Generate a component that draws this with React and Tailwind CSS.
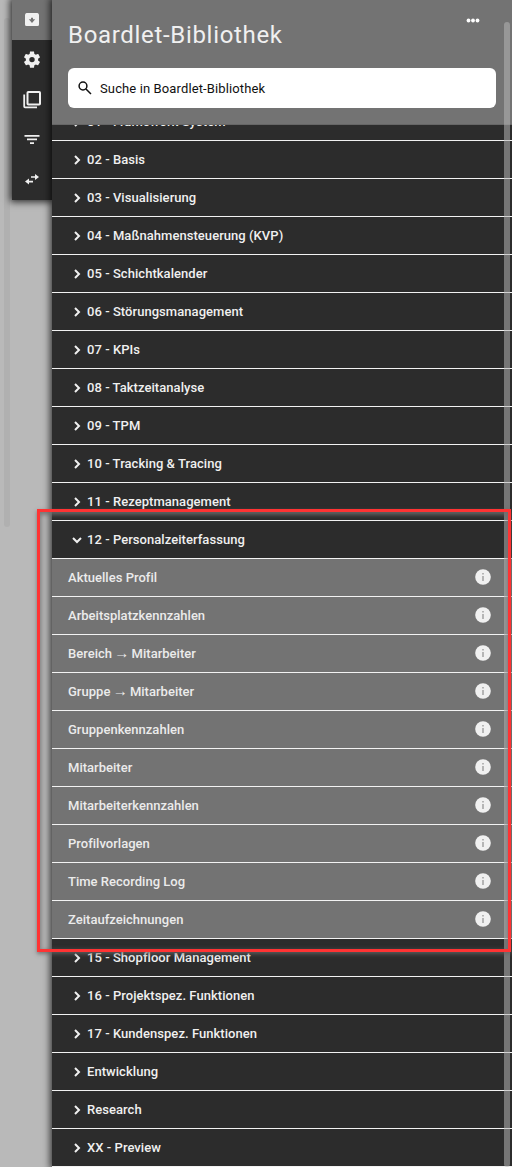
import React from "react";

const before = [
  "02 - Basis",
  "03 - Visualisierung",
  "04 - Maßnahmensteuerung (KVP)",
  "05 - Schichtkalender",
  "06 - Störungsmanagement",
  "07 - KPIs",
  "08 - Taktzeitanalyse",
  "09 - TPM",
  "10 - Tracking & Tracing",
  "11 - Rezeptmanagement",
];
const items = [
  "Aktuelles Profil",
  "Arbeitsplatzkennzahlen",
  "Bereich → Mitarbeiter",
  "Gruppe → Mitarbeiter",
  "Gruppenkennzahlen",
  "Mitarbeiter",
  "Mitarbeiterkennzahlen",
  "Profilvorlagen",
  "Time Recording Log",
  "Zeitaufzeichnungen",
];
const after = [
  "15 - Shopfloor Management",
  "16 - Projektspez. Funktionen",
  "17 - Kundenspez. Funktionen",
  "Entwicklung",
  "Research",
  "XX - Preview",
];

function Chevron({ open }) {
  return (
    <svg width="10" height="10" viewBox="0 0 10 10" fill="none" stroke="currentColor" strokeWidth="2">
      <path d={open ? "M1 3 L5 7 L9 3" : "M3 1 L7 5 L3 9"} />
    </svg>
  );
}

function Category({ label, open }) {
  return (
    <div className="flex h-[38px] shrink-0 items-center gap-[5px] border-b border-[#f2f2f2] bg-[#2c2c2c] pl-5 text-[13px] font-medium tracking-[0.05px] text-[#f0f0f0]">
      <Chevron open={open} />
      <span className="whitespace-nowrap">{label}</span>
    </div>
  );
}

function Item({ label }) {
  const [head, tail] = label.split("→");
  return (
    <div className="flex h-[38px] shrink-0 items-center justify-between border-b border-[#f2f2f2] bg-[#737373] pr-[21px] pl-4 text-[13px] font-medium tracking-[0.02px] text-[#ebebeb]">
      <span className="leading-5 whitespace-nowrap">
        {head}
        {tail && <span className="-mx-[1px] inline-block w-[15px] text-center font-['Liberation_Sans',sans-serif] text-[15px] leading-none font-normal">→</span>}
        {tail}
      </span>
      <svg className="-mt-px" width="16" height="16" viewBox="0 0 16 16">
        <circle cx="8" cy="8" r="7.8" fill="#f0f0f0" />
        <path d="M7 4h2v1.500H7zM7 7h2v5H7z" fill="#b5b5b5" />
      </svg>
    </div>
  );
}

function SideIcon({ children, active }) {
  return (
    <div className={active ? "flex h-10 items-center justify-center bg-[#737373]" : "flex h-10 items-center justify-center"}>
      <svg width="20" height="20" viewBox="0 0 20 20" fill="#f0f0f0">
        {children}
      </svg>
    </div>
  );
}

export default function App() {
  return (
    <div className="relative flex h-[1167px] w-[512px] overflow-hidden bg-[#b9b9b9] font-['Roboto',sans-serif]">
      <div className="absolute top-[18px] left-1 h-[509px] w-1.5 rounded-full bg-[#b0b0b0]" />
      <aside className="relative ml-3 h-[200px] w-10 shrink-0 bg-[#2c2c2c] shadow-[0_0_7px_2px_rgba(0,0,0,0.75)]">
        <SideIcon active>
          <path fillRule="evenodd" d="M4.500 3H15.500Q17 3.500 17 5V14.500Q17 16 15.500 16H4.500Q3 16 3 14.500V5Q3 3.500 4.500 3ZM9 7.800V9.300H6.800L10 13L13.200 9.300H11V7.800Z" />
        </SideIcon>
        <SideIcon>
          <g transform="translate(-.2 -.6) scale(.85)">
            <path d="M19.140 12.940c.040-.300.060-.610.060-.940 0-.320-.020-.640-.070-.940l2.030-1.580c.180-.140.230-.410.120-.610l-1.920-3.320c-.120-.220-.370-.290-.590-.220l-2.390.960c-.500-.380-1.030-.700-1.620-.940l-.360-2.540c-.040-.240-.240-.410-.480-.410h-3.840c-.240 0-.430.170-.470.410l-.360 2.540c-.590.240-1.130.570-1.620.940l-2.390-.960c-.220-.080-.470 0-.590.220L2.740 8.870c-.120.210-.080.470.120.610l2.030 1.580c-.050.300-.090.630-.090.940s.020.640.070.940l-2.030 1.580c-.180.140-.230.410-.120.610l1.920 3.320c.120.220.370.290.590.220l2.390-.960c.500.380 1.030.700 1.620.940l.360 2.540c.050.240.240.410.480.410h3.840c.240 0 .440-.170.470-.410l.360-2.540c.590-.240 1.130-.560 1.620-.940l2.390.960c.220.080.470 0 .590-.220l1.920-3.320c.120-.220.070-.470-.120-.610l-2.010-1.580zM12 15.200a3.200 3.200 0 1 1 0-6.400a3.200 3.200 0 0 1 0 6.400z" />
          </g>
        </SideIcon>
        <SideIcon>
          <rect x="5.500" y="2" width="12.500" height="12.500" rx=".8" fill="none" stroke="#f0f0f0" strokeWidth="2" />
          <path d="M2.200 4.500V16.500Q2.200 17.300 3 17.300H15" fill="none" stroke="#f0f0f0" strokeWidth="1.800" />
        </SideIcon>
        <SideIcon>
          <path d="M2.500 5h15v1.800h-15zM5 8.500h10v1.700H5zM8 12.200h4V14H8z" />
        </SideIcon>
        <SideIcon>
          <path d="M9 6.200h4V4l4 3-4 3V7.800H9zM11 10.800H7V8.600l-4 3 4 3v-2.200h4z" />
        </SideIcon>
      </aside>
      <main className="relative flex h-full w-[460px] shrink-0 flex-col bg-[#2c2c2c] shadow-[0_0_7px_2px_rgba(0,0,0,0.7)]">
        <header className="relative h-[125px] shrink-0 border-b border-[#666] bg-[#737373] px-4 pt-[18px]">
          <h1 className="text-[24px] leading-[34px] tracking-[0.680px] whitespace-nowrap text-[#f0f0f0]">Boardlet-Bibliothek</h1>
          <svg className="absolute top-[18px] left-[414px]" width="14" height="5" viewBox="0 0 14 5" fill="#fff">
            <circle cx="2.500" cy="2.500" r="1.900" />
            <circle cx="7" cy="2.500" r="1.900" />
            <circle cx="11.500" cy="2.500" r="1.900" />
          </svg>
          <div className="mt-4 flex h-10 w-[428px] items-center gap-2 rounded-[6px] bg-white pl-[10px] text-[13px] tracking-[0.120px] text-[#111]">
            <svg width="14" height="14" viewBox="0 0 14 14" fill="none" stroke="#111" strokeWidth="1.500">
              <circle cx="5" cy="5" r="3.900" />
              <path d="M8 8L13 13" />
            </svg>
            <span className="pt-px">Suche in Boardlet-Bibliothek</span>
          </div>
        </header>
        <div className="flex h-4 shrink-0 flex-col justify-end overflow-hidden tracking-[0.1px]">
          <Category label="01 - Framework System" />
        </div>
        {before.map((l) => <Category key={l} label={l} />)}
        <Category label="12 - Personalzeiterfassung" open />
        {items.map((l) => <Item key={l} label={l} />)}
        {after.map((l) => <Category key={l} label={l} />)}
        <div className="absolute top-[22px] right-[2px] h-[1145px] w-1.5 rounded-full bg-[#b4b4b4]/55" />
      </main>
      <div className="absolute top-[509px] left-[37px] h-[443px] w-[474px] border-3 border-[#ff3333] shadow-[0_2px_4px_rgba(100,100,100,0.8),inset_0_3px_4px_rgba(110,110,110,0.8),inset_2px_0_4px_rgba(110,110,110,0.4)]" />
    </div>
  );
}
